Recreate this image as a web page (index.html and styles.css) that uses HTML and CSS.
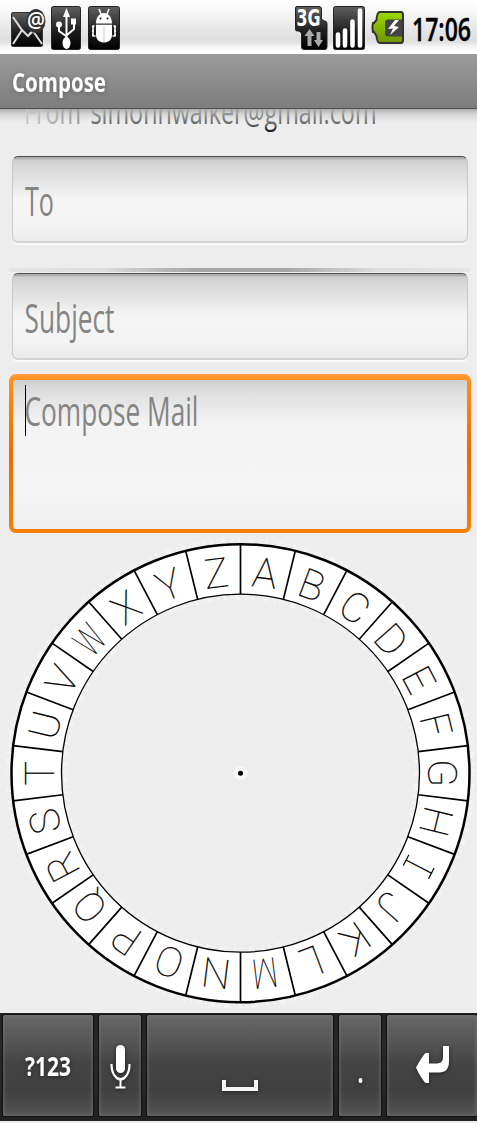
FILE: index.html
```html
<!DOCTYPE html>
<html lang="en">
<head>
<meta charset="utf-8">
<title>Compose</title>
<link rel="stylesheet" href="styles.css">
</head>
<body>
<svg class="defs" width="0" height="0" aria-hidden="true">
  <defs>
    <linearGradient id="tile" x1="0" y1="0" x2="0" y2="1"><stop offset="0" stop-color="#606060"/><stop offset=".6" stop-color="#1c1c1c"/><stop offset="1" stop-color="#000"/></linearGradient>
    <linearGradient id="green" x1="0" y1="0" x2="0" y2="1"><stop offset="0" stop-color="#9bdb00"/><stop offset="1" stop-color="#6e9400"/></linearGradient>
    <linearGradient id="label" gradientUnits="userSpaceOnUse" x1="25" y1="0" x2="80" y2="0"><stop offset="0" stop-color="#c8c8c8"/><stop offset="1" stop-color="#9a9a9a"/></linearGradient>
    <linearGradient id="address" gradientUnits="userSpaceOnUse" x1="0" y1="0" x2="0" y2="24"><stop offset="0" stop-color="#aaa"/><stop offset=".65" stop-color="#666"/><stop offset=".8" stop-color="#333"/><stop offset="1" stop-color="#111"/></linearGradient>
  </defs>
</svg>
<div class="screen">
  <header class="status">
    <div class="status-group">
      <svg class="mail" width="35" height="42" viewBox="0 0 35 42">
        <rect x=".5" y="6.500" width="31" height="34" rx="1.500" fill="url(#tile)" stroke="#333"/>
        <path d="M2 11L11 24L17 30L20 26M2 38L11 24M31 38L22 25L17 30" fill="none" stroke="#ddd" stroke-width="2"/>
        <ellipse cx="25" cy="15" rx="9.500" ry="12" fill="#333"/>
        <text x="16" y="22" class="at" textLength="18" lengthAdjust="spacingAndGlyphs">@</text>
      </svg>
      <svg width="30" height="44" viewBox="0 0 30 44">
        <rect x=".5" y=".5" width="29" height="43" rx="2" fill="url(#tile)" stroke="#222"/>
        <path d="M15.500 8V36M8 20V25L15 30M23 17V23L16 29" fill="none" stroke="#fff" stroke-width="2"/>
        <path d="M15.500 2L19 11H12Z" fill="#fff"/><ellipse cx="15.500" cy="37" rx="4" ry="6" fill="#fff"/><circle cx="8" cy="18.500" r="3" fill="#fff"/><rect x="20" y="12.500" width="5" height="6" fill="#fff"/>
      </svg>
      <svg width="32" height="44" viewBox="0 0 32 44">
        <rect x=".5" y=".5" width="31" height="43" rx="2" fill="url(#tile)" stroke="#222"/>
        <path d="M8 17.500C8 3.500 24 3.500 24 17.500ZM8 18.800H24V29C24 39 8 39 8 29Z" fill="#fff"/>
        <path d="M11 3L13 8M21 3L19 8M6.500 20H5V30H7.500M25.500 20H27V30H24.500M4 21H6M4 25H6M4 29H6M28 21H26M28 25H26M28 29H26" fill="none" stroke="#fff" stroke-width="1.500"/>
        <circle cx="12.500" cy="12.500" r="1" fill="#111"/><circle cx="19.500" cy="12.500" r="1" fill="#111"/><path d="M16 20V36" stroke="#ccc"/>
      </svg>
    </div>
    <div class="status-group right">
      <svg width="33" height="44" viewBox="0 0 33 44">
        <path d="M2 .5H24Q26.500 .5 26.500 3V13L29 15H30Q32 15 32 18V41Q32 43.500 30 43.500H9Q6.500 43.500 6.500 41V27L4 25H2Q.5 25 .5 23V2Q.5 .5 2 .5Z" fill="url(#tile)" stroke="#222"/>
        <text x="1.500" y="20" class="network" textLength="24" lengthAdjust="spacingAndGlyphs">3G</text>
        <path d="M14.500 23L19.500 30H16.500V40H12.500V30H9.500ZM21.500 26H25.500V34H28L23.500 41L19 34H21.500Z" fill="#aaa"/>
      </svg>
      <svg width="32" height="44" viewBox="0 0 32 44">
        <rect x=".5" y=".5" width="31" height="43" rx="2" fill="url(#tile)" stroke="#222"/>
        <path d="M5 28.500V39.500M12 24.500V39.500M19.500 15.500V39.500M27 4.500V39.500" stroke="#fff" stroke-width="4.600" stroke-linecap="round"/>
      </svg>
      <svg class="battery" width="33" height="33" viewBox="0 0 33 33">
        <path d="M9 1H30Q32 1 32 4V29Q32 32 30 32H9Q6 32 5.500 25L3 21H2Q1 16 2 12H3L5.500 9Q6 1 9 1Z" fill="url(#green)" stroke="#333" stroke-width="2"/>
        <path d="M31 8.500H17Q14 8.500 14 12V22Q14 25.500 17 25.500H31Z" fill="#444"/>
        <path d="M24 9L17 18L22 17.500L19 24L28 16L23 15L28 9Z" fill="#fff"/>
      </svg>
      <svg class="clock" width="60" height="48" viewBox="0 0 60 48"><text x="0" y="34.500" textLength="59" lengthAdjust="spacingAndGlyphs">17:06</text></svg>
    </div>
  </header>

  <div class="title"><svg width="120" height="54" viewBox="0 0 120 54"><text x="12" y="37.500" textLength="94" lengthAdjust="spacingAndGlyphs">Compose</text></svg></div>

  <main class="form">
    <div class="from">
      <svg width="477" height="28" viewBox="0 0 477 28">
        <text x="24" y="15" textLength="57" lengthAdjust="spacingAndGlyphs" fill="url(#label)">From</text>
        <text x="90.500" y="15" textLength="286" lengthAdjust="spacingAndGlyphs" fill="url(#address)">simonnwalker@gmail.com</text>
      </svg>
    </div>
    <div class="field to"><svg width="300" height="80"><text x="12" y="59" textLength="29" lengthAdjust="spacingAndGlyphs">To</text></svg></div>
    <div class="divider"></div>
    <div class="field subject"><svg width="300" height="80"><text x="11.500" y="59" textLength="90" lengthAdjust="spacingAndGlyphs">Subject</text></svg></div>
    <div class="field body"><svg width="300" height="140"><path d="M12.500 5V56" stroke="#000"/><text x="11.500" y="46" textLength="174" lengthAdjust="spacingAndGlyphs">Compose Mail</text></svg></div>
  </main>

  <svg class="dial" width="477" height="480" viewBox="0 533 477 480">
    <g transform="translate(240.500 773.200)">
      <circle class="haze" r="232.500"/><circle class="haze" r="176"/>
      <circle r="204" fill="none" stroke="#fff" stroke-width="50"/>
      <circle r="229" fill="none" stroke="#000" stroke-width="2.500"/>
      <circle r="179" fill="none" stroke="#000" stroke-width="1.300"/>
      <circle r="7" fill="#f8f8f8"/><circle r="2.500"/>
      <g class="spokes">
        <path id="spoke" d="M0-179V-229M0 179V229"/>
        <use href="#spoke" transform="rotate(13.846)"/><use href="#spoke" transform="rotate(27.692)"/>
        <use href="#spoke" transform="rotate(41.538)"/><use href="#spoke" transform="rotate(55.385)"/>
        <use href="#spoke" transform="rotate(69.231)"/><use href="#spoke" transform="rotate(83.077)"/>
        <use href="#spoke" transform="rotate(96.923)"/><use href="#spoke" transform="rotate(110.769)"/>
        <use href="#spoke" transform="rotate(124.615)"/><use href="#spoke" transform="rotate(138.462)"/>
        <use href="#spoke" transform="rotate(152.308)"/><use href="#spoke" transform="rotate(166.154)"/>
      </g>
      <g class="letters">
        <text y="-187" transform="rotate(6.923)">A</text><text y="-187" transform="rotate(20.769)">B</text>
        <text y="-187" transform="rotate(34.615)">C</text><text y="-187" transform="rotate(48.462)">D</text>
        <text y="-187" transform="rotate(62.308)">E</text><text y="-187" transform="rotate(76.154)">F</text>
        <text y="-187" transform="rotate(90)">G</text><text y="-187" transform="rotate(103.846)">H</text>
        <text y="-187" transform="rotate(117.692)">I</text><path class="serifs" d="M-6-187H6M-6-215.500H6" transform="rotate(117.692)"/><text y="-187" transform="rotate(131.538)">J</text>
        <text y="-187" transform="rotate(145.385)">K</text><text y="-187" transform="rotate(159.231)">L</text>
        <text y="-187" transform="rotate(173.077)" textLength="25" lengthAdjust="spacingAndGlyphs">M</text><text y="-187" transform="rotate(186.923)">N</text>
        <text y="-187" transform="rotate(200.769)">O</text><text y="-187" transform="rotate(214.615)">P</text>
        <text y="-187" transform="rotate(228.462)">Q</text><text y="-187" transform="rotate(242.308)">R</text>
        <text y="-187" transform="rotate(256.154)">S</text><text y="-187" transform="rotate(270)">T</text>
        <text y="-187" transform="rotate(283.846)">U</text><text y="-187" transform="rotate(297.692)">V</text>
        <text y="-187" transform="rotate(311.538)" textLength="24" lengthAdjust="spacingAndGlyphs">W</text><text y="-187" transform="rotate(325.385)">X</text>
        <text y="-187" transform="rotate(339.231)">Y</text><text y="-187" transform="rotate(353.077)">Z</text>
      </g>
    </g>
  </svg>

  <footer class="keyboard">
    <div class="key"><svg width="90" height="101"><text x="22" y="60.500" textLength="46" lengthAdjust="spacingAndGlyphs">?123</text></svg></div>
    <div class="key"><svg width="42" height="101"><rect x="17" y="30" width="9" height="28" rx="4.500" fill="#fff"/><path d="M12.500 49C12.500 69 30.500 69 30.500 49" fill="none" stroke="#fff" stroke-width="2.200"/><path d="M15 59Q21.500 68 28 59L26 64Q21.500 67 17 64Z" fill="#fff"/><path d="M21.500 64V73M16.500 72.500H26.500" stroke="#fff" stroke-width="2"/></svg></div>
    <div class="key"><svg width="186" height="101"><path d="M77 65V74H109V65" fill="none" stroke="#f5f5f5" stroke-width="4"/></svg></div>
    <div class="key"><svg width="42" height="101"><text class="dot" x="18.500" y="68" textLength="6" lengthAdjust="spacingAndGlyphs">.</text></svg></div>
    <div class="key last"><svg width="90" height="101"><path d="M29 52.500Q34 43 38.500 38H42V48.500H50Q56 48.500 56 42V31H62V46Q62 57.500 52 57.500H42V68H38.500Q33 62 29 52.500Z" fill="#fff"/></svg></div>
  </footer>
</div>
</body>
</html>
```
FILE: styles.css
```css
* { box-sizing: border-box; }
body { margin: 0; background: #ededed; font-family: "Open Sans", "Noto Sans", sans-serif; }
svg { display: block; }
.defs { position: absolute; }
.screen { display: flex; flex-direction: column; width: 477px; height: 1123px; overflow: hidden; }

.status {
  display: flex; justify-content: space-between; height: 54px; padding: 6px 5px 0 11px;
  background: linear-gradient(#fff 0, #fafafa 15%, #dedede 73%, #e2e2e2 78%, #f8f8f8 88%, #fff 100%);
}
.status-group { display: flex; gap: 7px; align-items: flex-start; }
.status-group .mail { margin-right: -2px; }
.status-group.right { gap: 5px; }
.battery { margin: 5px 3px 0 1px; }
.clock text { font-size: 32.500px; font-weight: 600; stroke: #000; stroke-width: .4px; }
.at { font-size: 22px; font-weight: 600; fill: #fff; }
.network { font-family: "DejaVu Sans", sans-serif; font-size: 23px; font-weight: 700; fill: #fff; }

.title { height: 55px; background: linear-gradient(#9b9b9b, #7d7d7d); border-bottom: 1px solid #505050; }
.title text { font-size: 27.500px; font-weight: 700; fill: #fff; }
.title svg { filter: drop-shadow(0 1px 2px #4448); }

.form { display: flex; flex-direction: column; height: 424px; }
.from { height: 47px; background: linear-gradient(#a9aea9 0, #d5d7d5 5px, #ededed 13px); }
.from text { font-size: 32px; }

.field { margin: 0 9px 0 12px; border-radius: 6px; }
.field text { font-size: 40px; fill: #858585; }
.to, .subject {
  height: 87px; border: 1px solid #c9c9c9; border-top: 1px solid #505050; border-bottom: 2px solid #d4d4d4;
  background: linear-gradient(#aaa 0, #b5b5b5 2px, #cecece 3px, #d8d8d8 10px, #e8e8e8 28px, #f5f5f5 50%, #f4f4f4 80%, #ebebeb 100%);
  box-shadow: 0 2px 0 #fafafa;
}
.divider { height: 4px; margin: 25px 7px 1px 9px; background: linear-gradient(90deg, #e5e5e5 0, #ddd 20%, #a6a6a6 40%, #a6a6a6 60%, #ddd 80%, #e5e5e5 100%); }
.body {
  height: 159px; margin: 14px 6px 0 9px; padding: 6px 4px 4px; border-radius: 7px;
  background:
    linear-gradient(#cfcfcf 0, #e0e0e0 14px, #f3f3f3 42px, #f5f5f5 75%, #eee 100%) content-box,
    linear-gradient(#ff9d3f 0, #ff8d1a 7px, #f06800 50%, #f57f0a 100%);
}

.dial { flex: none; }
.haze { fill: none; stroke: #fff; stroke-width: 5px; stroke-dasharray: 3 4 1 3 6 5 2 4; opacity: .35; }
.spokes { fill: none; stroke: #000; stroke-width: 1.700px; }
.letters text { font-family: Roboto, Lato, sans-serif; font-weight: 100; font-size: 41px; text-anchor: middle; stroke: #000; stroke-width: .2px; }
.serifs { stroke: #000; stroke-width: 1.200px; }

.keyboard {
  display: flex; gap: 6px; flex: none; height: 108px; padding: 1px 0 6px 3px;
  background: linear-gradient(#222, #292929 30%, #202020); border-top: 1px solid #222;
}
.key {
  flex: none; height: 101px; border-radius: 2px; overflow: hidden;
  background: linear-gradient(#686868, #434343 50%, #404040 75%, #545454);
  box-shadow: 0 0 0 1px #111, inset 0 0 4px #777;
}
.key svg { filter: drop-shadow(0 1px 2px #222); }
.key text { font-size: 27.500px; font-weight: 700; fill: #fff; }
.key .dot { font-size: 30px; }
```
